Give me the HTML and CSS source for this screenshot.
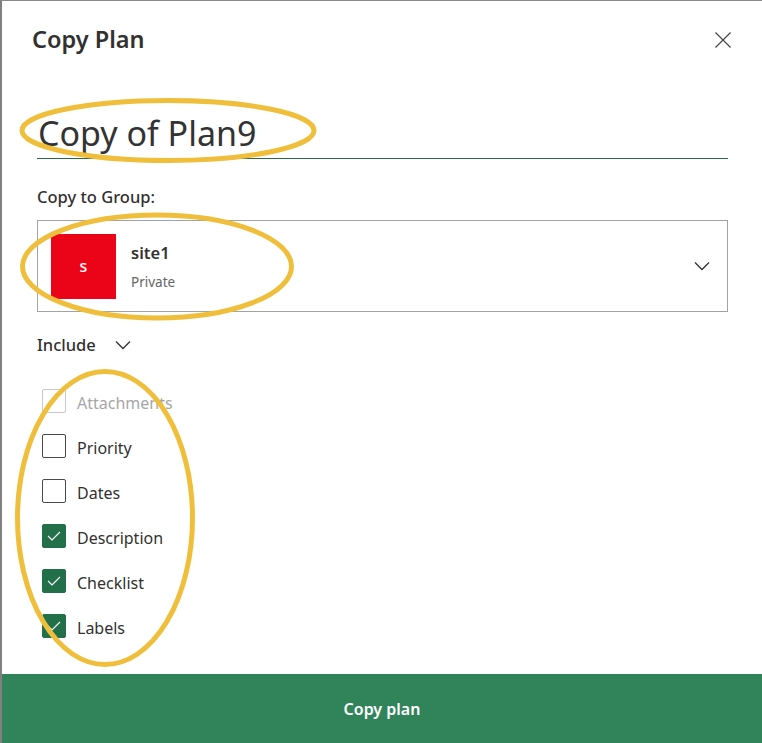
FILE: index.html
```html
<!DOCTYPE html>
<html>
<head>
<meta charset="utf-8">
<link rel="stylesheet" href="styles.css">
</head>
<body>
<div class="dialog">
  <div class="header">
    <h1 class="title">Copy Plan</h1>
    <button class="close" aria-label="Close">
      <svg width="16" height="16" viewBox="0 0 16 16"><path d="M0.5 0.5 L15.5 15.5 M15.5 0.5 L0.5 15.5" stroke="#444" stroke-width="1.2" fill="none"/></svg>
    </button>
  </div>
  <div class="content">
    <div class="name-field">Copy of Plan9</div>
    <div class="label">Copy to Group:</div>
    <div class="group-select">
      <div class="avatar">s</div>
      <div class="group-info">
        <div class="group-name">site1</div>
        <div class="group-type">Private</div>
      </div>
      <svg class="chev" width="16" height="10" viewBox="0 0 16 10"><path d="M1 1.5 L8 8.5 L15 1.5" stroke="#333" stroke-width="1.3" fill="none"/></svg>
    </div>
    <div class="include">
      <span>Include</span>
      <svg class="chev" width="16" height="10" viewBox="0 0 16 10"><path d="M1 1.5 L8 8.5 L15 1.5" stroke="#333" stroke-width="1.3" fill="none"/></svg>
    </div>
    <ul class="checks">
      <li class="check disabled"><span class="box"></span><span class="text">Attachments</span></li>
      <li class="check"><span class="box"></span><span class="text">Priority</span></li>
      <li class="check"><span class="box"></span><span class="text">Dates</span></li>
      <li class="check on"><span class="box"><svg width="14" height="10" viewBox="0 0 14 10"><path d="M1 5 L5 9 L13 1" stroke="#fff" stroke-width="1.1" fill="none"/></svg></span><span class="text">Description</span></li>
      <li class="check on"><span class="box"><svg width="14" height="10" viewBox="0 0 14 10"><path d="M1 5 L5 9 L13 1" stroke="#fff" stroke-width="1.1" fill="none"/></svg></span><span class="text">Checklist</span></li>
      <li class="check on"><span class="box"><svg width="14" height="10" viewBox="0 0 14 10"><path d="M1 5 L5 9 L13 1" stroke="#fff" stroke-width="1.1" fill="none"/></svg></span><span class="text">Labels</span></li>
    </ul>
  </div>
  <button class="footer">Copy plan</button>
  <svg class="annot" width="762" height="743" viewBox="0 0 762 743">
    <ellipse cx="168" cy="130.5" rx="146" ry="30" />
    <ellipse cx="157" cy="266.5" rx="134.5" ry="51.5" />
    <ellipse cx="105" cy="518" rx="87.5" ry="146.5" />
  </svg>
</div>
</body>
</html>
```
FILE: styles.css
```css
* { box-sizing: border-box; }
html, body { margin: 0; padding: 0; }
body {
  width: 762px;
  height: 743px;
  overflow: hidden;
  background: #fff;
  font-family: "Noto Sans", "Open Sans", sans-serif;
  color: #323130;
}
.dialog {
  position: relative;
  height: 743px;
  border-left: 2px solid #808080;
  border-top: 1px solid #8a8a8a;
  display: flex;
  flex-direction: column;
  background: #fff;
}
.header {
  display: flex;
  justify-content: space-between;
  align-items: flex-start;
  padding: 22px 31px 0 30px;
}
.title {
  margin: 0;
  font-size: 23.5px;
  font-weight: 570;
  line-height: 32px;
  color: #323130;
}
.close {
  border: 0;
  background: none;
  padding: 0;
  margin-top: 9px;
  width: 16px;
  height: 16px;
  display: block;
}
.close svg { display: block; }
.content {
  padding: 0 34px 0 35px;
  display: flex;
  flex-direction: column;
}
.name-field {
  margin-top: 55px;
  font-size: 34px;
  line-height: 46px;
  padding: 0 0 2px 1px;
  border-bottom: 1px solid #2b6a45;
  color: #333;
}
.label {
  margin-top: 27px;
  font-size: 16.5px;
  font-weight: 500;
  line-height: 22px;
}
.group-select {
  margin-top: 12px;
  height: 92px;
  border: 1px solid #a3a3a3;
  display: flex;
  align-items: center;
  padding: 0 17px 0 13px;
}
.avatar {
  width: 65px;
  height: 65px;
  background: #eb0418;
  color: #fff;
  font-size: 16px;
  font-weight: 500;
  display: flex;
  align-items: center;
  justify-content: center;
}
.group-info {
  flex: 1;
  margin-left: 15px;
  display: flex;
  flex-direction: column;
  gap: 9px;
}
.group-name {
  font-size: 16.5px;
  font-weight: 600;
  line-height: 22px;
}
.group-type {
  font-size: 13.5px;
  line-height: 18px;
  color: #666;
}
.chev { display: block; }
.include {
  margin-top: 22px;
  display: flex;
  align-items: center;
  gap: 19px;
  font-size: 16.5px;
  font-weight: 500;
  line-height: 22px;
}
.checks {
  list-style: none;
  margin: 33px 0 0 0;
  padding: 0 0 0 5px;
  display: flex;
  flex-direction: column;
  gap: 21px;
}
.check {
  display: flex;
  align-items: flex-start;
  gap: 11px;
  font-size: 16px;
  line-height: 24px;
  height: 24px;
}
.check .text { margin-top: 2px; }
.box {
  width: 24px;
  height: 24px;
  border: 1px solid #4a4a4a;
  border-radius: 2px;
  display: flex;
  align-items: center;
  justify-content: center;
}
.check.disabled { color: #a6a6a6; }
.check.disabled .box { border-color: #c8c8c8; }
.check.on .box { background: #21704a; border-color: #21704a; }
.footer {
  margin-top: auto;
  height: 69px;
  border: 0;
  background: #31845a;
  color: #fff;
  font-family: inherit;
  font-size: 16px;
  font-weight: 600;
  display: block;
  width: 100%;
}
.annot {
  position: absolute;
  left: -2px;
  top: -1px;
  pointer-events: none;
}
.annot ellipse {
  fill: none;
  stroke: #efbf3b;
  stroke-width: 5;
}
```
